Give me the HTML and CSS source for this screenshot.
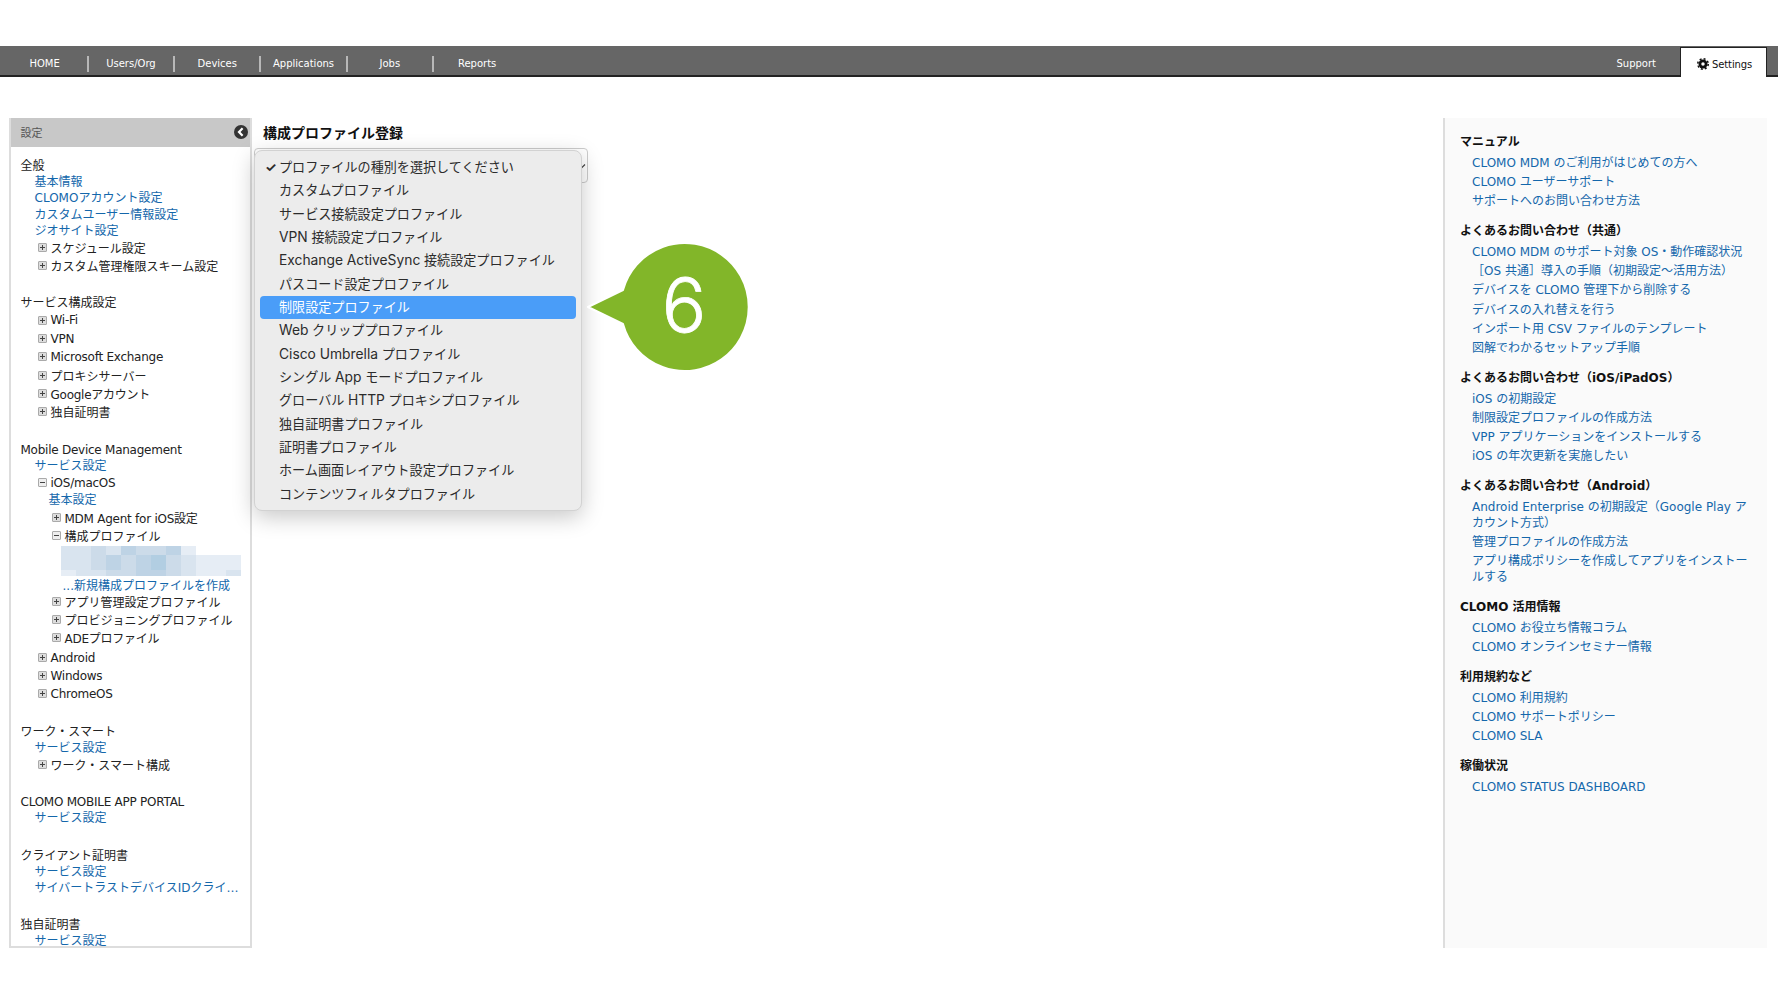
FILE: index.html
```html
<!DOCTYPE html>
<html lang="ja">
<head>
<meta charset="utf-8">
<title>構成プロファイル登録</title>
<link rel="stylesheet" href="styles.css">
</head>
<body>
<header class="nav">
  <ul class="nav-left">
    <li>HOME</li><li>Users/Org</li><li>Devices</li><li>Applications</li><li>Jobs</li><li class="last">Reports</li>
  </ul>
  <div class="nav-support">Support</div>
  <div class="nav-tab">
    <svg class="gear" viewBox="0 0 24 24" width="12" height="12">
      <circle cx="12" cy="12" r="9" fill="#111"/>
      <circle cx="12" cy="12" r="10.500" fill="none" stroke="#111" stroke-width="3" stroke-dasharray="4 4.250"/>
      <circle cx="12" cy="12" r="3.500" fill="#fff"/>
    </svg>
    <span>Settings</span>
  </div>
</header>

<main class="main">
  <aside class="side">
    <div class="side-head">
      <span>設定</span>
      <svg viewBox="0 0 14 14" width="14" height="14"><circle cx="7" cy="7" r="7" fill="#333"/><path d="M8.600 3.300 5 7l3.600 3.700" fill="none" stroke="#fff" stroke-width="2.200"/></svg>
    </div>
    <div class="side-body">
      <section class="group">
        <h3>全般</h3>
        <a class="lk">基本情報</a>
        <a class="lk">CLOMOアカウント設定</a>
        <a class="lk">カスタムユーザー情報設定</a>
        <a class="lk">ジオサイト設定</a>
        <div class="row row-up"><i class="tg"></i>スケジュール設定</div>
        <div class="row"><i class="tg"></i>カスタム管理権限スキーム設定</div>
      </section>
      <section class="group">
        <h3>サービス構成設定</h3>
        <div class="row la"><i class="tg"></i>Wi-Fi</div>
        <div class="row la"><i class="tg"></i>VPN</div>
        <div class="row la"><i class="tg"></i>Microsoft Exchange</div>
        <div class="row"><i class="tg"></i>プロキシサーバー</div>
        <div class="row la"><i class="tg"></i>Googleアカウント</div>
        <div class="row"><i class="tg"></i>独自証明書</div>
      </section>
      <section class="group">
        <h3 class="la">Mobile Device Management</h3>
        <a class="lk">サービス設定</a>
        <div class="row la"><i class="tg open"></i>iOS/macOS</div>
        <a class="lk lk2">基本設定</a>
        <div class="row row2 la"><i class="tg"></i>MDM Agent for iOS設定</div>
        <div class="row row2"><i class="tg open"></i>構成プロファイル</div>
        <div class="blur">
          <b class="s1"></b><b class="s1"></b><b class="s2"></b><b class="s1"></b><b class="s3"></b><b class="s2"></b><b class="s2"></b><b class="s3"></b><b class="s0"></b><b class="n"></b><b class="n"></b><b class="n"></b>
          <b class="s1"></b><b class="s1"></b><b class="s2"></b><b class="s3"></b><b class="s2"></b><b class="s3"></b><b class="s4"></b><b class="s2"></b><b class="s1"></b><b class="s0"></b><b class="s0"></b><b class="s0"></b>
          <b class="s0"></b><b class="s1"></b><b class="s1"></b><b class="s2"></b><b class="s2"></b><b class="s3"></b><b class="s3"></b><b class="s2"></b><b class="s1"></b><b class="s0"></b><b class="s0"></b><b class="s1"></b>
        </div>
        <a class="lk lk3">...新規構成プロファイルを作成</a>
        <div class="row row2"><i class="tg"></i>アプリ管理設定プロファイル</div>
        <div class="row row2"><i class="tg"></i>プロビジョニングプロファイル</div>
        <div class="row row2 la"><i class="tg"></i>ADEプロファイル</div>
        <div class="row row-down la"><i class="tg"></i>Android</div>
        <div class="row la"><i class="tg"></i>Windows</div>
        <div class="row la"><i class="tg"></i>ChromeOS</div>
      </section>
      <section class="group">
        <h3>ワーク・スマート</h3>
        <a class="lk">サービス設定</a>
        <div class="row row-up"><i class="tg"></i>ワーク・スマート構成</div>
      </section>
      <section class="group">
        <h3 class="la">CLOMO MOBILE APP PORTAL</h3>
        <a class="lk">サービス設定</a>
      </section>
      <section class="group">
        <h3>クライアント証明書</h3>
        <a class="lk">サービス設定</a>
        <a class="lk cut">サイバートラストデバイスIDクライアント証明書</a>
      </section>
      <section class="group">
        <h3>独自証明書</h3>
        <a class="lk">サービス設定</a>
      </section>
    </div>
  </aside>

  <div class="content">
    <h1 class="title">構成プロファイル登録</h1>
    <div class="select">
      <svg viewBox="0 0 8 8" width="8" height="8"><path d="M1 2.500 4 5.500 7 2.500" fill="none" stroke="#444" stroke-width="1.200"/></svg>
    </div>
    <ul class="menu">
      <li><span class="check">✓</span>プロファイルの種別を選択してください</li>
      <li>カスタムプロファイル</li>
      <li>サービス接続設定プロファイル</li>
      <li><span class="lat">VPN</span> 接続設定プロファイル</li>
      <li><span class="lat">Exchange ActiveSync</span> 接続設定プロファイル</li>
      <li>パスコード設定プロファイル</li>
      <li class="active">制限設定プロファイル</li>
      <li><span class="lat">Web</span> クリッププロファイル</li>
      <li><span class="lat">Cisco Umbrella</span> プロファイル</li>
      <li>シングル <span class="lat">App</span> モードプロファイル</li>
      <li>グローバル <span class="lat">HTTP</span> プロキシプロファイル</li>
      <li>独自証明書プロファイル</li>
      <li>証明書プロファイル</li>
      <li>ホーム画面レイアウト設定プロファイル</li>
      <li>コンテンツフィルタプロファイル</li>
    </ul>
    <svg class="bubble" viewBox="-2 0 172 136" width="172" height="136">
      <path d="M37 51A64 64 0 1 1 37 85L2 68Z" fill="#82b629" stroke="#fff" stroke-width="2" stroke-linejoin="round"/>
      <text x="98" y="93" text-anchor="middle" class="bubble-num">6</text>
    </svg>
  </div>

  <aside class="help">
    <section>
      <h3>マニュアル</h3>
      <a>CLOMO MDM のご利用がはじめての方へ</a>
      <a>CLOMO ユーザーサポート</a>
      <a>サポートへのお問い合わせ方法</a>
    </section>
    <section>
      <h3>よくあるお問い合わせ（共通）</h3>
      <a>CLOMO MDM のサポート対象 OS・動作確認状況</a>
      <a>［OS 共通］導入の手順（初期設定～活用方法）</a>
      <a>デバイスを CLOMO 管理下から削除する</a>
      <a>デバイスの入れ替えを行う</a>
      <a>インポート用 CSV ファイルのテンプレート</a>
      <a>図解でわかるセットアップ手順</a>
    </section>
    <section>
      <h3>よくあるお問い合わせ（iOS/iPadOS）</h3>
      <a>iOS の初期設定</a>
      <a>制限設定プロファイルの作成方法</a>
      <a>VPP アプリケーションをインストールする</a>
      <a>iOS の年次更新を実施したい</a>
    </section>
    <section>
      <h3>よくあるお問い合わせ（Android）</h3>
      <a>Android Enterprise の初期設定（Google Play ア<br>カウント方式）</a>
      <a>管理プロファイルの作成方法</a>
      <a>アプリ構成ポリシーを作成してアプリをインストー<br>ルする</a>
    </section>
    <section>
      <h3>CLOMO 活用情報</h3>
      <a>CLOMO お役立ち情報コラム</a>
      <a>CLOMO オンラインセミナー情報</a>
    </section>
    <section>
      <h3>利用規約など</h3>
      <a>CLOMO 利用規約</a>
      <a>CLOMO サポートポリシー</a>
      <a>CLOMO SLA</a>
    </section>
    <section>
      <h3>稼働状況</h3>
      <a>CLOMO STATUS DASHBOARD</a>
    </section>
  </aside>
</main>
</body>
</html>
```
FILE: styles.css
```css
* { box-sizing: border-box; }
html, body { margin: 0; padding: 0; background: #fff; }
body {
  font-family: "DejaVu Sans", "Noto Sans CJK JP", sans-serif;
  font-size: 12px;
  color: #222;
  padding-top: 46px;
  height: 1000px;
  overflow: hidden;
}
ul { list-style: none; margin: 0; padding: 0; }
h1, h3 { margin: 0; }

/* top bar */
.nav {
  display: flex;
  height: 31px;
  background: #666;
  border-bottom: 2px solid #222;
  color: #fff;
  font-size: 10px;
  line-height: 16px;
}
.nav-left { display: flex; padding: 10px 0 0 2.500px; flex: 1; }
.nav-left li {
  width: 86.300px;
  height: 16px;
  text-align: center;
  border-right: 2px solid #b8b8b8;
}
.nav-left li.last { border-right: 0; }
.nav-support { padding: 10px 24px 0 0; }
.nav-tab {
  display: flex;
  align-items: center;
  gap: 3px;
  width: 87px;
  height: 30px;
  margin: 1px 11px -2px 0;
  padding: 4px 0 0 16px;
  background: #fff;
  color: #111;
  border: 1px solid #222;
  border-bottom: 0;
  letter-spacing: -.1px;
}
.gear { margin-top: -1px; }

/* layout */
.main { display: flex; margin-top: 41px; height: 830px; }

/* left tree */
.side {
  width: 243px;
  margin-left: 9px;
  border: 2px solid #ddd;
  border-top: 0;
  overflow: hidden;
  flex: none;
}
.side-head {
  display: flex;
  align-items: center;
  justify-content: space-between;
  height: 29px;
  padding: 0 2px 2px 9.500px;
  background: #c8c8c8;
  color: #555;
  font-size: 11px;
}
.side-body { padding: 11px 0 0 9.500px; }
.group { margin-bottom: 21px; }
.group h3 { font-weight: 400; font-size: 12px; line-height: 16px; color: #222; }
.group .la { letter-spacing: -.25px; }
.lk { display: block; padding-left: 14px; line-height: 16.300px; color: #1467ab; }
.lk2 { padding-left: 28px; }
.lk3 { padding-left: 42px; margin-bottom: -1.500px; }
.cut { width: 220px; white-space: nowrap; overflow: hidden; text-overflow: ellipsis; }
.row {
  display: flex;
  align-items: center;
  gap: 4px;
  height: 18.200px;
  padding-left: 17px;
}
.row-up { margin-top: -1.200px; }
.row-down { margin-top: 1.500px; }
.row2 { padding-left: 31px; }
.tg {
  flex: none;
  width: 9px;
  height: 9px;
  border: 1px solid #aaa;
  border-radius: 1px;
  background:
    linear-gradient(#444, #444) center / 5px 1px no-repeat,
    linear-gradient(#444, #444) center / 1px 5px no-repeat,
    #ddd;
}
.tg.open {
  background:
    linear-gradient(#444, #444) center / 5px 1px no-repeat,
    #eee;
}
.blur {
  display: grid;
  grid-template-columns: repeat(12, 15px);
  grid-template-rows: 9px 15px 6px;
  margin: 1px 0 2px 40px;
}
.s0 { background: #e6edf5; }
.s1 { background: #d9e4ef; }
.s2 { background: #ccdbe9; }
.s3 { background: #bed3e5; }
.s4 { background: #b2cee2; }
.n { background: transparent; }

/* centre */
.content { position: relative; flex: 1; padding: 7px 0 0 2px; }
.title { margin-left: 9px; font-size: 14px; line-height: 16px; font-weight: 700; color: #111; }
.select {
  display: flex;
  align-items: center;
  justify-content: flex-end;
  width: 334px;
  height: 35px;
  margin-top: 7px;
  padding-right: 1px;
  border: 1px solid #ccc;
  border-radius: 4px;
}
.menu {
  position: absolute;
  left: 2px;
  top: 32px;
  width: 328px;
  height: 361px;
  padding: 5px 5px 0;
  background: #ececec;
  border: 1px solid #d2d2d2;
  border-radius: 8px;
  box-shadow: 0 6px 22px rgba(0, 0, 0, .22);
  font-family: "Inter", "Noto Sans CJK JP", sans-serif;
  font-size: 13.100px;
  color: #2b2b2b;
}
.menu li {
  height: 23.330px;
  line-height: 23px;
  padding-left: 19px;
  border-radius: 4px;
  white-space: nowrap;
}
.menu li.active { background: #4a9df8; color: #fff; }
.lat { font-size: 13.800px; line-height: 1; }
.check { display: inline-block; width: 14px; margin-left: -14px; font-weight: 700; }
.bubble { position: absolute; left: 332px; top: 121px; }
.bubble-num { font-family: "Inter", sans-serif; font-weight: 300; font-size: 74px; fill: #fff; stroke: #fff; stroke-width: .8px; }

/* right help */
.help {
  width: 324px;
  margin-right: 11px;
  padding: 16px 10px 0 15px;
  background: #fafafa;
  border-left: 2px solid #ddd;
  flex: none;
}
.help section { margin-bottom: 13.700px; }
.help h3 { font-size: 12px; line-height: 16px; font-weight: 700; color: #111; margin-bottom: 5px; }
.help a { display: block; padding-left: 12px; margin-bottom: 3.200px; line-height: 16px; color: #1467ab; white-space: nowrap; }
```
